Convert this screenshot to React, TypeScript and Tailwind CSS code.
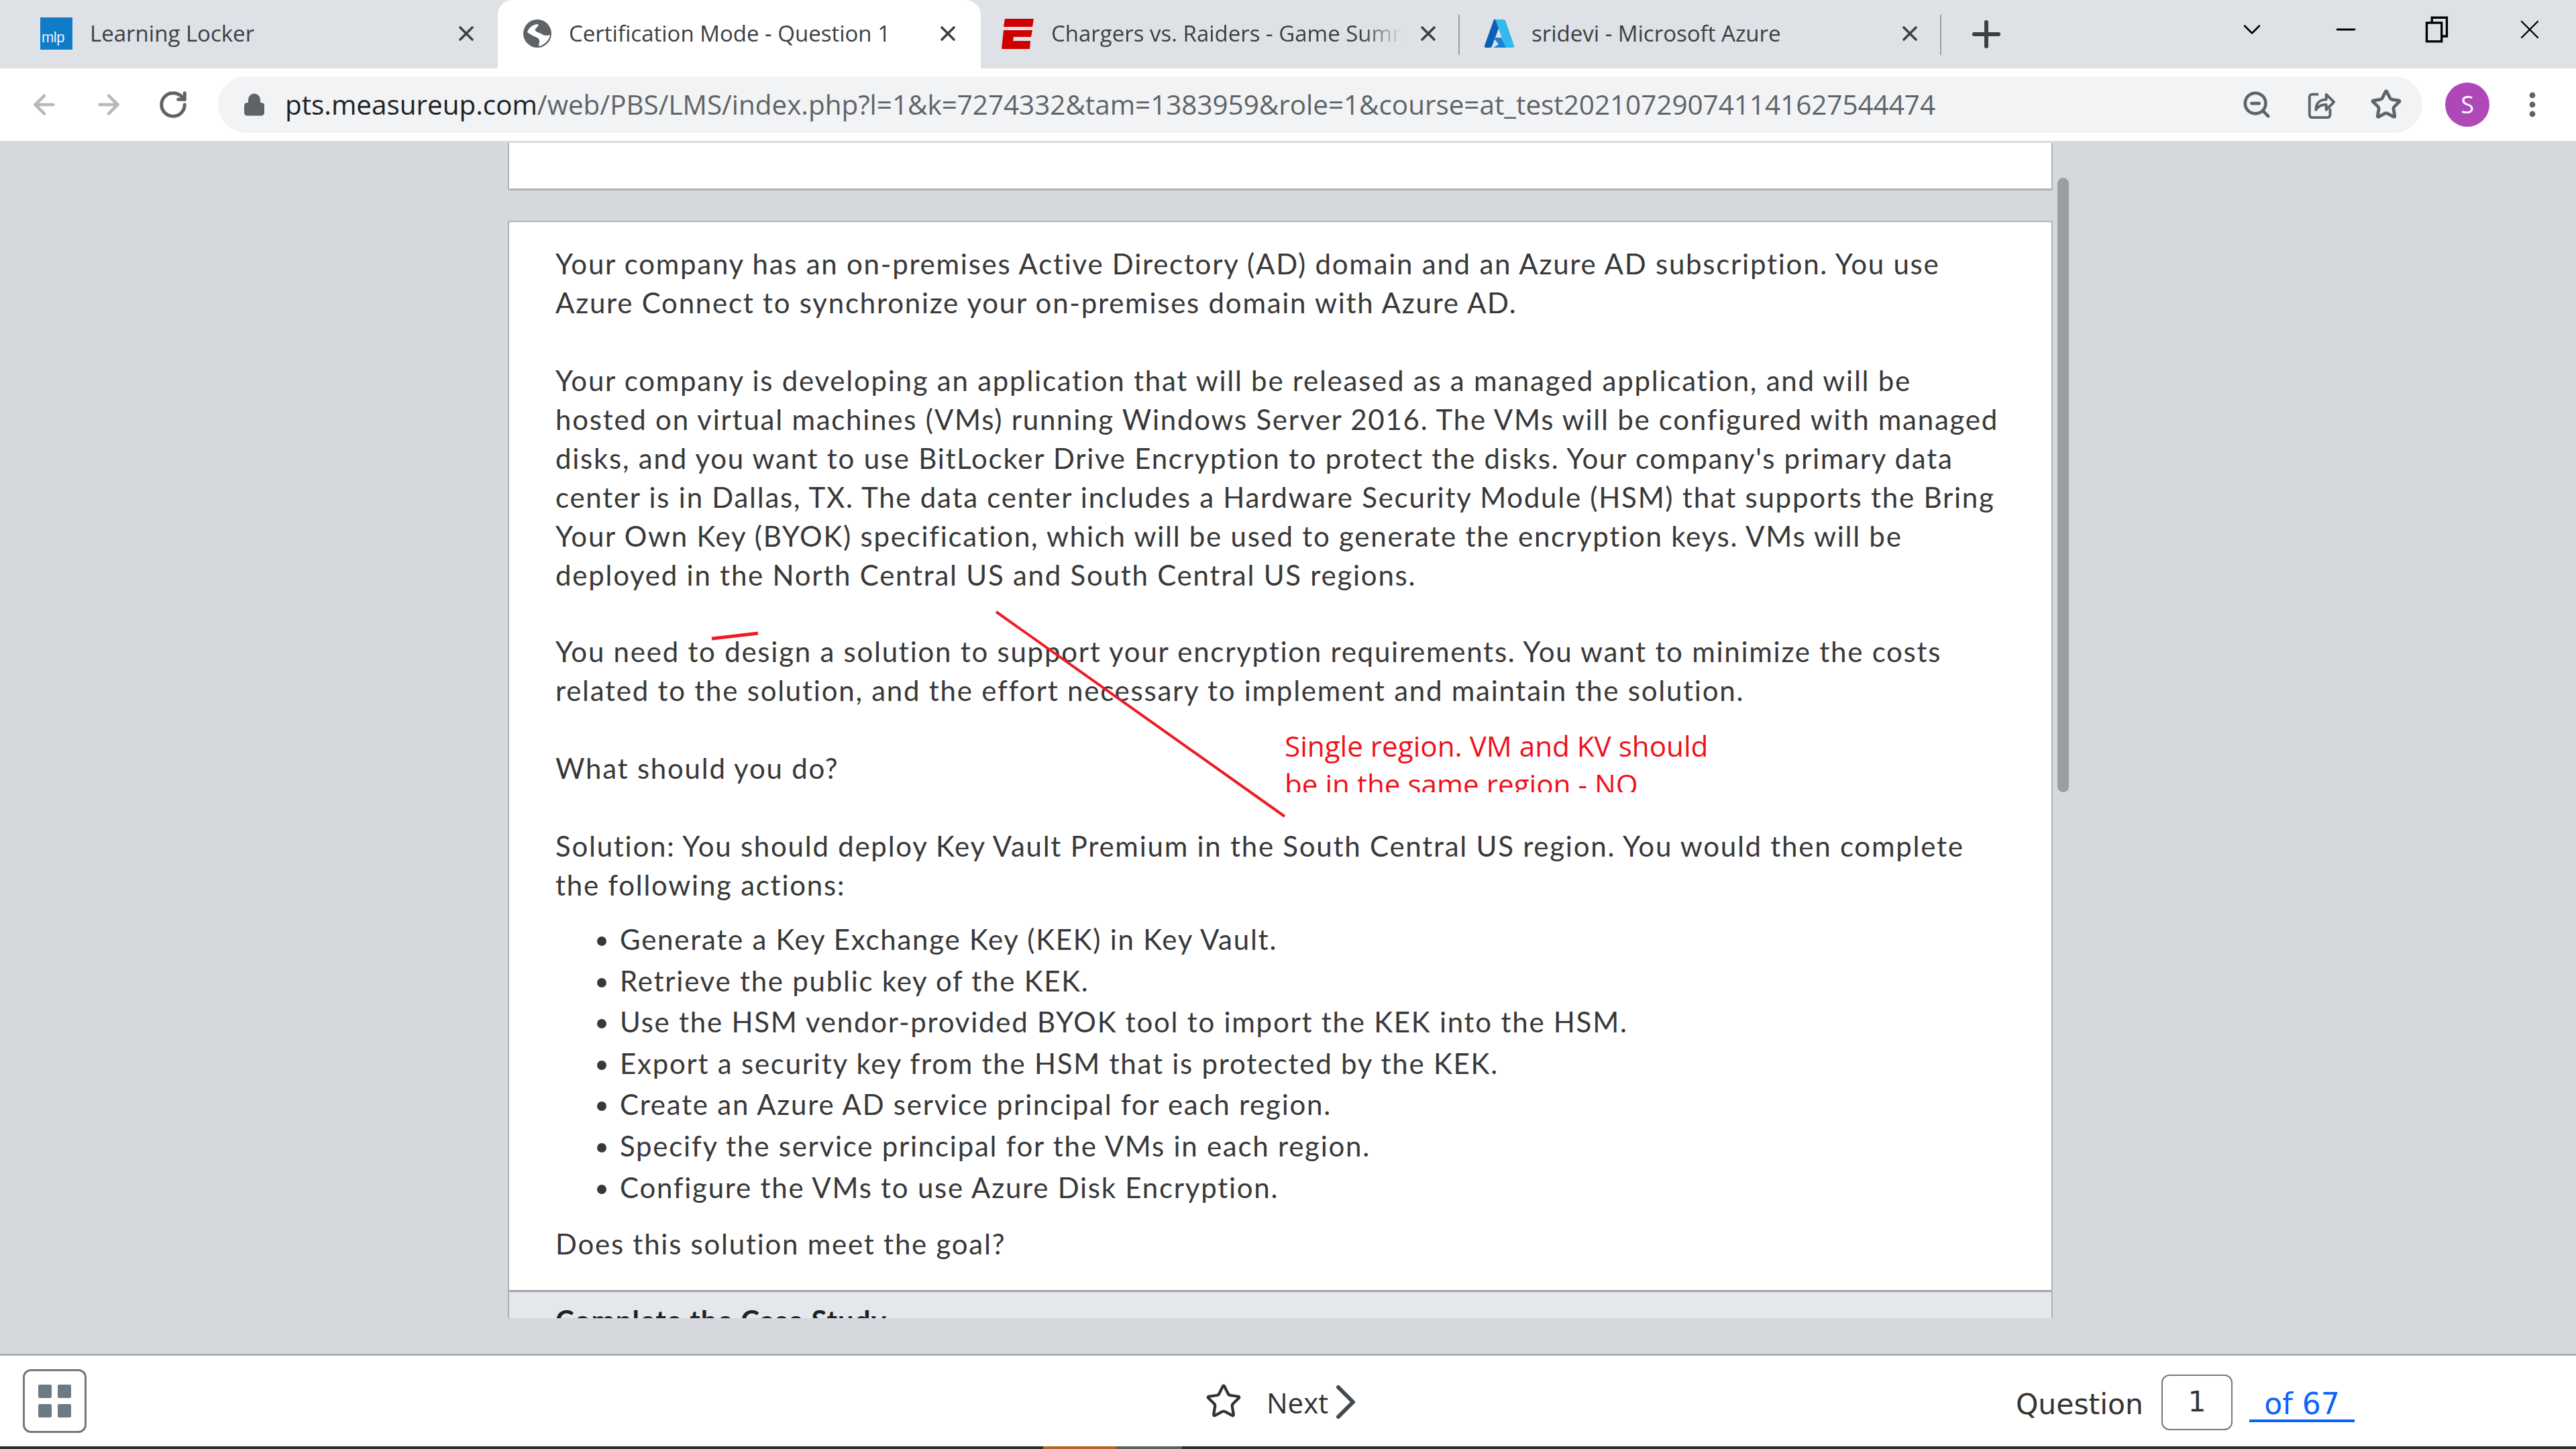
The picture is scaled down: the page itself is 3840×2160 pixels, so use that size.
import { ArrowLeft, ArrowRight, RotateCw, Lock, ZoomOut, Star, Plus, X, Minus, ChevronDown, MoreVertical } from "lucide-react"

function MeasureUpIcon() {
  return (
    <svg viewBox="0 0 48 48" className="h-[48px] w-[48px] shrink-0">
      <rect width="48" height="48" fill="#0f7cc8" />
      <text x="2" y="37" fontSize="22" fill="#e6f2fb" fontFamily="Liberation Sans, sans-serif" letterSpacing="-0.5">mlp</text>
    </svg>
  )
}

function GlobeIcon() {
  return (
    <svg viewBox="0 0 42 42" className="h-[42px] w-[42px] shrink-0">
      <circle cx="21" cy="21" r="21" fill="#5f6368" />
      <path d="M6 19C8 12 15 7 22 7C24 9 20 12 18 14C17 17 20 19 24 20C27 21 30 24 34 24C36 24 39 23 40 23C39 30 33 37 24 40C22 38 25 34 24 31C23 27 18 26 14 24C11 22 8 21 6 19Z" fill="#fff" />
    </svg>
  )
}

function EspnIcon() {
  return (
    <svg viewBox="0 0 48 45" className="h-[45px] w-[48px] shrink-0">
      <path d="M5 0H48L46 12H3Z" fill="#d00000" />
      <path d="M3 17H46L44 27H18L17 33H43L42 45H0Z" fill="#d00000" />
    </svg>
  )
}

function AzureIcon() {
  return (
    <svg viewBox="0 0 44 42" className="h-[42px] w-[44px] shrink-0">
      <path d="M14 0H26L11 40C10.500 41 10 42 8 42H2C.5 42-.5 41 0 39Z" fill="#0a5fb4" />
      <path d="M16 0H29C30 0 30.500 .5 31 1.500L44 39C44.500 41 43.500 42 42 42H31Z" fill="#35b8ee" />
      <path d="M13 27H25L32 42H13L21 37Z" fill="#1a82d8" />
    </svg>
  )
}

function Tab({ icon, title, active, fade, w, pad, divider }: { icon: React.ReactNode; title: string; active?: boolean; fade?: boolean; w: string; pad: string; divider?: boolean }) {
  return (
    <div className={`relative flex h-[102px] shrink-0 items-center ${w} ${active ? "rounded-t-[22px] bg-white" : ""}`}>
      <div className={`flex h-full w-full items-center pb-[2px] ${pad}`}>
        {icon}
        <span className={`ml-[26px] overflow-hidden whitespace-nowrap font-['Open_Sans',sans-serif] text-[33px] text-[#3c4043] ${fade ? "max-w-[524px] [mask-image:linear-gradient(to_right,#000_88%,transparent)]" : ""}`}>
          {title}
        </span>
      </div>
      <X className={`absolute top-[32px] h-[36px] w-[36px] text-[#3c4043] ${active ? "right-[31px]" : "right-[29px]"}`} strokeWidth={2.4} />
      {divider && <div className="absolute right-0 top-[22px] h-[60px] w-[2px] bg-[#9aa0a6]" />}
    </div>
  )
}

function BodyText() {
  return (
    <div className="pl-[69px] pt-[33px] font-['Lato',sans-serif] text-[42px] leading-[58px] tracking-[1.75px] text-[#383838]">
      <p>
        Your company has an on-premises Active Directory (AD) domain and an Azure AD subscription. You use
        <br />
        Azure Connect to synchronize your on-premises domain with Azure AD.
      </p>
      <p className="mt-[58px]">
        Your company is developing an application that will be released as a managed application, and will be
        <br />
        hosted on virtual machines (VMs) running Windows Server 2016. The VMs will be configured with managed
        <br />
        disks, and you want to use BitLocker Drive Encryption to protect the disks. Your company's primary data
        <br />
        center is in Dallas, TX. The data center includes a Hardware Security Module (HSM) that supports the Bring
        <br />
        Your Own Key (BYOK) specification, which will be used to generate the encryption keys. VMs will be
        <br />
        deployed in the North Central US and South Central US regions.
      </p>
      <p className="mt-[56px]">
        You need to design a solution to support your encryption requirements. You want to minimize the costs
        <br />
        related to the solution, and the effort necessary to implement and maintain the solution.
      </p>
      <p className="mt-[58px]">What should you do?</p>
      <p className="mt-[58px]">
        Solution: You should deploy Key Vault Premium in the South Central US region. You would then complete
        <br />
        the following actions:
      </p>
      <ul className="mt-[22px] list-disc pl-[96px] leading-[61.6px]">
        <li>Generate a Key Exchange Key (KEK) in Key Vault.</li>
        <li>Retrieve the public key of the KEK.</li>
        <li>Use the HSM vendor-provided BYOK tool to import the KEK into the HSM.</li>
        <li>Export a security key from the HSM that is protected by the KEK.</li>
        <li>Create an Azure AD service principal for each region.</li>
        <li>Specify the service principal for the VMs in each region.</li>
        <li>Configure the VMs to use Azure Disk Encryption.</li>
      </ul>
      <p className="mt-[24px]">Does this solution meet the goal?</p>
    </div>
  )
}

export default function App() {
  return (
    <div className="flex h-[2160px] w-[3840px] flex-col overflow-hidden bg-[#d5d8dd]">
      {/* tab strip */}
      <div className="flex h-[102px] shrink-0 items-center bg-[#dee1e6]">
        <Tab icon={<MeasureUpIcon />} title="Learning Locker" pad="pl-[60px]" w="w-[742px]" />
        <Tab icon={<GlobeIcon />} title="Certification Mode - Question 1" active pad="pl-[38px]" w="w-[720px]" />
        <Tab icon={<EspnIcon />} title="Chargers vs. Raiders - Game Summary" fade divider pad="pl-[31px]" w="w-[714px]" />
        <Tab icon={<AzureIcon />} title="sridevi - Microsoft Azure" divider pad="pl-[37px]" w="w-[718px]" />
        <Plus className="ml-[36px] h-[62px] w-[62px] text-[#3c4043]" strokeWidth={2.3} />
        <div className="ml-auto flex items-center gap-[96px] self-start pr-[45px] pt-[20px]">
          <ChevronDown className="h-[44px] w-[44px] text-black" strokeWidth={1.4} />
          <Minus className="h-[44px] w-[44px] text-black" strokeWidth={1.6} />
          <svg viewBox="0 0 32 36" className="h-[40px] w-[36px]" fill="none" stroke="#000" strokeWidth="3">
            <rect x="2" y="9" width="20" height="25" />
            <path d="M9 9V2h20v25h-7" />
          </svg>
          <X className="h-[48px] w-[48px] text-black" strokeWidth={1.2} />
        </div>
      </div>

      {/* toolbar */}
      <div className="flex h-[108px] shrink-0 items-center bg-white pl-[43px]">
        <ArrowLeft className="h-[46px] w-[46px] text-[#b6b8bb]" strokeWidth={2.4} />
        <ArrowRight className="ml-[50px] h-[46px] w-[46px] text-[#b6b8bb]" strokeWidth={2.4} />
        <RotateCw className="ml-[50px] h-[46px] w-[46px] text-[#5f6368]" strokeWidth={2.6} />
        <div className="ml-[44px] flex h-[84px] w-[3286px] items-center rounded-full bg-[#f1f3f4] pl-[36px]">
          <Lock className="h-[36px] w-[36px] fill-[#5f6368] text-[#5f6368]" strokeWidth={2} />
          <span className="ml-[28px] whitespace-nowrap font-['Open_Sans',sans-serif] text-[40.4px] text-[#5f6368]">
            <span className="text-[#202124]">pts.measureup.com</span>/web/PBS/LMS/index.php?l=1&amp;k=7274332&amp;tam=1383959&amp;role=1&amp;course=at_test202107290741141627544474
          </span>
          <div className="ml-auto flex items-center gap-[50px] pr-[30px]">
            <ZoomOut className="h-[46px] w-[46px] text-[#5f6368]" strokeWidth={2.4} />
            <svg viewBox="0 0 24 24" className="h-[46px] w-[46px]" fill="none" stroke="#5f6368" strokeWidth="2" strokeLinejoin="round">
              <path d="M10 4H5a2 2 0 0 0-2 2v14a2 2 0 0 0 2 2h12a2 2 0 0 0 2-2v-5" />
              <path d="M8 16c0-5 3-8 8-8V4l6 6-6 6v-4c-4 0-6 1-8 4z" />
            </svg>
            <Star className="h-[48px] w-[48px] text-[#5f6368]" strokeWidth={2.4} />
          </div>
        </div>
        <div className="ml-[34px] flex h-[66px] w-[66px] items-center justify-center rounded-full bg-[#ae47b8] font-['Open_Sans',sans-serif] text-[36px] text-white">
          S
        </div>
        <MoreVertical className="ml-[40px] h-[48px] w-[48px] fill-[#5f6368] text-[#5f6368]" strokeWidth={2.4} />
      </div>
      <div className="h-[3px] shrink-0 bg-[#d8dadd]" />

      {/* page */}
      <div className="relative flex min-h-0 flex-1 flex-col pl-[757px]">
        <div className="h-[71px] w-[2303px] shrink-0 rounded-b-[3px] border-x-2 border-b-[3px] border-[#b0b2b4] bg-white" />
        <div className="relative mt-[45px] h-[1636px] w-[2303px] shrink-0 overflow-hidden rounded-t-[3px] border-x-2 border-t-2 border-[#b0b2b4] bg-white">
          <BodyText />
          {/* handwritten notes on the page */}
          <svg className="pointer-events-none absolute left-0 top-0 h-full w-full" fill="none" stroke="#ed1c24">
            <path d="M726 581 L1156 886" strokeWidth="4" />
            <path d="M302 621 L371 613" strokeWidth="5" />
          </svg>
          <div className="absolute left-[1156px] top-[752px] h-[98px] w-[660px] overflow-hidden font-['Open_Sans',sans-serif] text-[42.2px] leading-[57px] text-[#f0101a]">
            Single region. VM and KV should
            <br />
            be in the same region - NO
          </div>
          <div className="absolute bottom-0 left-0 h-[42px] w-full overflow-hidden border-t-[3px] border-[#a0a3a5] bg-[#e3e8ec] pl-[69px] pt-[13px] font-['Lato',sans-serif] text-[42px] font-bold leading-[58px] tracking-[1px] text-[#222]">
            Complete the Case Study
          </div>
        </div>
        <div className="absolute left-[3067px] top-[52px] h-[916px] w-[17px] rounded-full bg-[#9a9da1]" />
      </div>

      {/* footer */}
      <div className="relative flex h-[138px] shrink-0 items-center border-t-[3px] border-[#a9adb0] bg-white">
        <div className="ml-[34px] grid h-[95px] w-[95px] grid-cols-[20px_20px] content-center justify-center gap-[9px] rounded-[12px] border-[3px] border-[#6c7a84]">
          <div className="h-[20px] rounded-[2px] bg-[#6c7a84]" />
          <div className="h-[20px] rounded-[2px] bg-[#6c7a84]" />
          <div className="h-[20px] rounded-[2px] bg-[#6c7a84]" />
          <div className="h-[20px] rounded-[2px] bg-[#6c7a84]" />
        </div>
        <Star className="ml-[1667px] h-[56px] w-[56px] text-[#333]" strokeWidth={1.8} />
        <span className="ml-[36px] mt-[4px] font-['Open_Sans',sans-serif] text-[42px] text-[#333]">Next</span>
        <svg viewBox="0 0 32 52" className="ml-[10px] mt-[2px] h-[52px] w-[32px]" fill="none" stroke="#3f4a52" strokeWidth="6" strokeLinecap="round" strokeLinejoin="round">
          <path d="M5 4L27 26L5 48" />
        </svg>
        <div className="ml-auto flex items-center pr-[330px] font-['DejaVu_Sans',sans-serif] text-[42.5px] text-[#333]">
          <span className="mt-[10px]">Question</span>
          <div className="ml-[27px] mt-[3px] flex h-[83px] w-[106px] items-center justify-center rounded-[12px] border-2 border-[#6c7a84]">1</div>
          <div className="ml-[25px] w-[157px] border-b-[4px] border-[#0a63ff] pt-[12px] text-center text-[44px] leading-[46px] text-[#0a63ff]">of 67</div>
        </div>
      </div>
      <div className="flex h-[4px] shrink-0 bg-[#2b2d30] pl-[1555px]">
        <div className="h-full w-[109px] bg-[#b5622a]" />
        <div className="h-full w-[98px] bg-[#5c5e61]" />
      </div>
    </div>
  )
}
